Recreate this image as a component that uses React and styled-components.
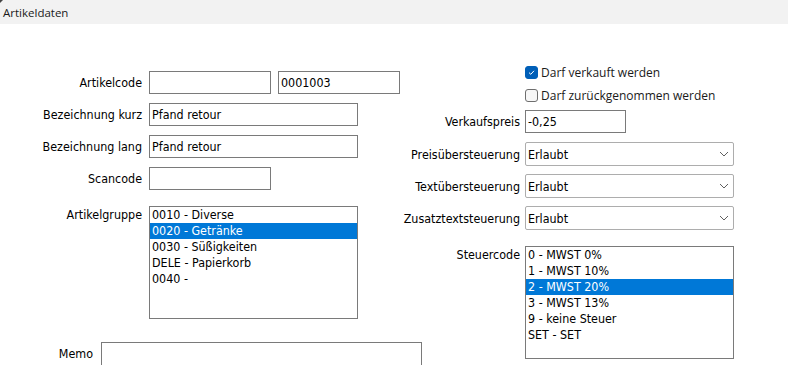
import React from "react";
import styled, { createGlobalStyle } from "styled-components";

const Global = createGlobalStyle`
  html, body {
    margin: 0;
    padding: 0;
    background: #ffffff;
  }
  body {
    font-family: "DejaVu Sans Condensed", "DejaVu Sans", sans-serif;
    font-size: 12.4px;
    color: #000000;
  }
`;

const Page = styled.div`
  width: 788px;
  height: 365px;
  overflow: hidden;
  position: relative;
`;

const Header = styled.div`
  height: 24px;
  background: #f2f2f2;
  display: flex;
  align-items: center;
  padding-left: 3px;
  font-family: "Open Sans", "Noto Sans", sans-serif;
  font-size: 11.5px;
  color: #1a1a1a;
`;

const Corner = styled.div`
  position: absolute;
  left: 0;
  top: 0;
  width: 0;
  height: 0;
  border-top: 3px solid #444;
  border-right: 3px solid transparent;
`;

const Body = styled.div`
  display: flex;
`;

const Column = styled.div`
  width: ${(p) => p.$width}px;
  flex: none;
  padding-top: ${(p) => p.$top}px;
  display: flex;
  flex-direction: column;
`;

const Row = styled.div`
  display: flex;
  align-items: ${(p) => (p.$top ? "flex-start" : "center")};
  gap: ${(p) => p.$gap ?? 7}px;
  margin-bottom: ${(p) => p.$mb ?? 9}px;
`;

const Label = styled.div`
  width: ${(p) => p.$width}px;
  flex: none;
  text-align: right;
  white-space: nowrap;
  padding-top: ${(p) => p.$pt ?? 0}px;
`;

const Input = styled.div`
  box-sizing: border-box;
  flex: none;
  width: ${(p) => p.$width}px;
  height: 23px;
  border: 1px solid #7a7a7a;
  padding: 0 2px;
  display: flex;
  align-items: center;
  white-space: nowrap;
`;

const Select = styled.div`
  box-sizing: border-box;
  flex: none;
  width: 209px;
  height: 24px;
  border: 1px solid #adadad;
  border-radius: 2px;
  padding: 0 4px 0 2px;
  display: flex;
  align-items: center;
  justify-content: space-between;
`;

const List = styled.div`
  box-sizing: border-box;
  flex: none;
  width: 209px;
  height: ${(p) => p.$height}px;
  border: 1px solid #7a7a7a;
`;

const Item = styled.div`
  height: 16px;
  line-height: 16px;
  padding-left: 2px;
  white-space: nowrap;
  background: ${(p) => (p.$selected ? "#0078d7" : "transparent")};
  color: ${(p) => (p.$selected ? "#ffffff" : "#000000")};
`;

const Check = styled.label`
  display: flex;
  align-items: center;
  gap: 3px;
  height: 16px;
  margin-left: 125px;
  margin-bottom: ${(p) => p.$mb}px;
  font-family: "Open Sans", "Noto Sans", sans-serif;
  font-size: 12px;
  color: #1a1a1a;
`;

const Box = styled.span`
  box-sizing: border-box;
  width: 13px;
  height: 13px;
  border-radius: 3px;
  display: flex;
  align-items: center;
  justify-content: center;
  background: ${(p) => (p.$checked ? "#005fb8" : "#f7f7f7")};
  border: 1px solid ${(p) => (p.$checked ? "#005fb8" : "#6e6e6e")};
`;

const Memo = styled.div`
  box-sizing: border-box;
  flex: none;
  width: 321px;
  height: 40px;
  border: 1px solid #7a7a7a;
`;

const Chevron = () => (
  <svg width="10" height="6" viewBox="0 0 10 6">
    <path d="M1 1 L5 5 L9 1" fill="none" stroke="#606060" strokeWidth="1" />
  </svg>
);

const Tick = () => (
  <svg width="9" height="9" viewBox="0 0 9 9">
    <path d="M2 4.6 L3.8 6.3 L7 2.8" fill="none" stroke="#ffffff" strokeWidth="1" />
  </svg>
);

const gruppen = ["0010 - Diverse", "0020 - Getränke", "0030 - Süßigkeiten", "DELE - Papierkorb", "0040 -"];
const steuer = ["0 - MWST 0%", "1 - MWST 10%", "2 - MWST 20%", "3 - MWST 13%", "9 - keine Steuer", "SET - SET"];

export default function App() {
  return (
    <Page>
      <Global />
      <Corner />
      <Header>Artikeldaten</Header>
      <Body>
        <Column $width={400} $top={47}>
          <Row>
            <Label $width={142}>Artikelcode</Label>
            <Input $width={122} />
            <Input $width={122}>0001003</Input>
          </Row>
          <Row>
            <Label $width={142}>Bezeichnung kurz</Label>
            <Input $width={209}>Pfand retour</Input>
          </Row>
          <Row>
            <Label $width={142}>Bezeichnung lang</Label>
            <Input $width={209}>Pfand retour</Input>
          </Row>
          <Row $mb={16}>
            <Label $width={142}>Scancode</Label>
            <Input $width={122} />
          </Row>
          <Row $top $mb={23}>
            <Label $width={142} $pt={1}>Artikelgruppe</Label>
            <List $height={113}>
              {gruppen.map((g) => (
                <Item key={g} $selected={g === "0020 - Getränke"}>{g}</Item>
              ))}
            </List>
          </Row>
          <Row $top $gap={8}>
            <Label $width={93} $pt={4}>Memo</Label>
            <Memo />
          </Row>
        </Column>
        <Column $width={388} $top={40}>
          <Check $mb={7}>
            <Box $checked><Tick /></Box>
            Darf verkauft werden
          </Check>
          <Check $mb={7}>
            <Box />
            Darf zurückgenommen werden
          </Check>
          <Row $gap={5}>
            <Label $width={120}>Verkaufspreis</Label>
            <Input $width={101}>-0,25</Input>
          </Row>
          <Row $gap={5} $mb={8}>
            <Label $width={120}>Preisübersteuerung</Label>
            <Select>Erlaubt<Chevron /></Select>
          </Row>
          <Row $gap={5} $mb={8}>
            <Label $width={120}>Textübersteuerung</Label>
            <Select>Erlaubt<Chevron /></Select>
          </Row>
          <Row $gap={5} $mb={16}>
            <Label $width={120}>Zusatztextsteuerung</Label>
            <Select>Erlaubt<Chevron /></Select>
          </Row>
          <Row $gap={5} $top>
            <Label $width={120} $pt={1}>Steuercode</Label>
            <List $height={113}>
              {steuer.map((s) => (
                <Item key={s} $selected={s === "2 - MWST 20%"}>{s}</Item>
              ))}
            </List>
          </Row>
        </Column>
      </Body>
    </Page>
  );
}
